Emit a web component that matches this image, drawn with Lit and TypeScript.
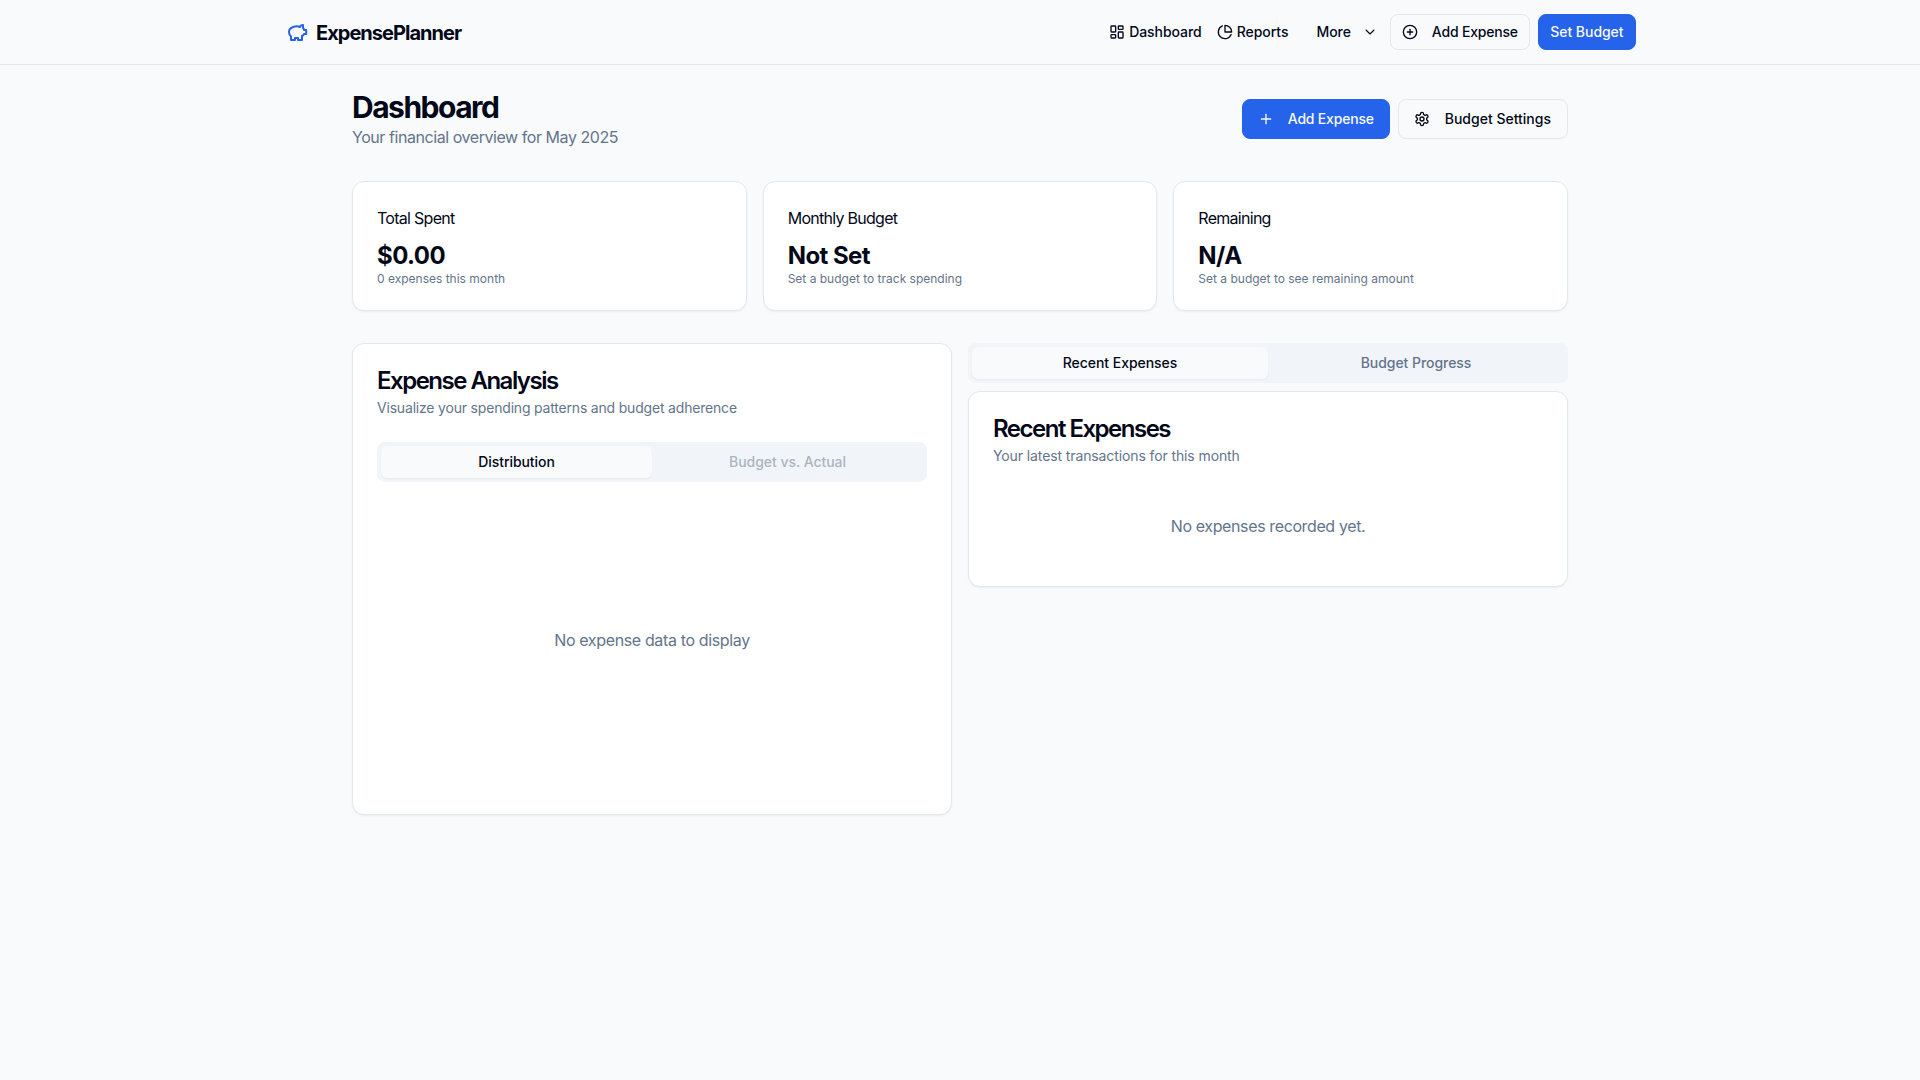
import {LitElement, html, css, svg} from 'lit';
import {customElement} from 'lit/decorators.js';

const icon = (body: unknown) =>
  html`<svg class="icon" viewBox="0 0 24 24" fill="none" stroke="currentColor" stroke-width="2" stroke-linecap="round" stroke-linejoin="round">${body}</svg>`;

const dashboardIcon = svg`<rect x="3" y="3" width="7" height="9" rx="1"/><rect x="14" y="3" width="7" height="5" rx="1"/><rect x="14" y="12" width="7" height="9" rx="1"/><rect x="3" y="16" width="7" height="5" rx="1"/>`;
const pieIcon = svg`<path d="M21.21 15.89A10 10 0 1 1 8 2.83"/><path d="M22 12A10 10 0 0 0 12 2v10z"/>`;
const chevronIcon = svg`<path d="m6 9 6 6 6-6"/>`;
const plusCircleIcon = svg`<circle cx="12" cy="12" r="10"/><path d="M8 12h8"/><path d="M12 8v8"/>`;
const plusIcon = svg`<path d="M5 12h14"/><path d="M12 5v14"/>`;
const gearIcon = svg`<path d="M12.22 2h-.44a2 2 0 0 0-2 2v.18a2 2 0 0 1-1 1.73l-.43.25a2 2 0 0 1-2 0l-.15-.08a2 2 0 0 0-2.73.73l-.22.38a2 2 0 0 0 .73 2.73l.15.1a2 2 0 0 1 1 1.72v.51a2 2 0 0 1-1 1.74l-.15.09a2 2 0 0 0-.73 2.73l.22.38a2 2 0 0 0 2.73.73l.15-.08a2 2 0 0 1 2 0l.43.25a2 2 0 0 1 1 1.73V20a2 2 0 0 0 2 2h.44a2 2 0 0 0 2-2v-.18a2 2 0 0 1 1-1.73l.43-.25a2 2 0 0 1 2 0l.15.08a2 2 0 0 0 2.73-.73l.22-.39a2 2 0 0 0-.73-2.73l-.15-.08a2 2 0 0 1-1-1.74v-.5a2 2 0 0 1 1-1.74l.15-.09a2 2 0 0 0 .73-2.73l-.22-.38a2 2 0 0 0-2.73-.73l-.15.08a2 2 0 0 1-2 0l-.43-.25a2 2 0 0 1-1-1.73V4a2 2 0 0 0-2-2z"/><circle cx="12" cy="12" r="3"/>`;
const piggyIcon = svg`<path d="M19 5c-1.5 0-2.8 1.4-3 2-3.5-1.5-11-.3-11 5 0 1.8 0 3 2 4.5V20h4v-2h3v2h4v-4c1-.5 1.7-1 2-2h2.2v-4H20c0-1-.5-1.5-1-2V5z"/>`;

const stats = [
  {label: 'Total Spent', value: '$0.00', note: '0 expenses this month'},
  {label: 'Monthly Budget', value: 'Not Set', note: 'Set a budget to track spending'},
  {label: 'Remaining', value: 'N/A', note: 'Set a budget to see remaining amount'},
];

@customElement('app-root')
export class AppRoot extends LitElement {
  static override styles = css`
    :host {
      display: block;
      min-height: 1080px;
      background: #f8fafc;
      color: #020817;
      font-family: Inter, 'Noto Sans', sans-serif;
      font-size: 16px;
      line-height: 24px;
    }
    .icon {
      display: block;
      width: 16px;
      height: 16px;
      flex: none;
    }
    .topbar {
      height: 64px;
      border-bottom: 1px solid #e2e8f0;
    }
    .topbar-inner {
      box-sizing: border-box;
      max-width: 1400px;
      height: 100%;
      margin: 0 auto;
      padding: 0 24px;
      display: flex;
      align-items: center;
      justify-content: space-between;
    }
    .logo {
      display: flex;
      align-items: center;
      gap: 8px;
      font-size: 20px;
      line-height: 28px;
      font-weight: 700;
      letter-spacing: -0.98px;
    }
    .logo span {
      padding-top: 2px;
    }
    .logo .icon {
      width: 24px;
      height: 24px;
      color: #2563eb;
    }
    .nav {
      display: flex;
      align-items: center;
      font-size: 14px;
      line-height: 20px;
      font-weight: 500;
      letter-spacing: -0.05px;
    }
    .nav-link {
      display: flex;
      align-items: center;
      gap: 4px;
      margin-right: 15px;
    }
    .more {
      display: flex;
      align-items: center;
      gap: 11px;
      margin: 0 12px 0 13px;
    }
    .more .icon {
      stroke-width: 1.6;
    }
    .btn {
      box-sizing: border-box;
      display: flex;
      align-items: center;
      border: 1px solid #e2e8f0;
      border-radius: 8px;
      background: #f8fafc;
      font-size: 14px;
      line-height: 20px;
      font-weight: 500;
      white-space: nowrap;
    }
    .btn.primary {
      background: #2563eb;
      border-color: #2563eb;
      color: #f8fafc;
    }
    .btn.sm {
      height: 36px;
      padding: 0 11px;
      gap: 14px;
    }
    .btn.sm.primary {
      padding: 0 11.5px;
    }
    .btn.md {
      height: 40px;
      padding: 0 16px 0 15px;
      gap: 15px;
    }
    .btn.md.primary {
      padding: 0 15px;
      gap: 14px;
    }
    .tight {
      letter-spacing: -0.2px;
    }
    .nav .btn + .btn {
      margin-left: 8px;
    }
    main {
      box-sizing: border-box;
      max-width: 1280px;
      margin: 0 auto;
      padding: 24px 32px;
    }
    .page-head {
      display: flex;
      align-items: center;
      justify-content: space-between;
      margin-bottom: 32px;
    }
    h1 {
      margin: 0;
      padding-top: 1px;
      font-size: 30px;
      line-height: 35px;
      font-weight: 700;
      letter-spacing: -1.5px;
    }
    .muted {
      color: #64748b;
    }
    .page-head p {
      margin: 0;
      letter-spacing: -0.44px;
    }
    .actions {
      display: flex;
      gap: 8px;
    }
    .stats {
      display: grid;
      grid-template-columns: repeat(3, 1fr);
      gap: 16px;
      margin-bottom: 32px;
    }
    .card {
      background: #fff;
      border: 1px solid #e2e8f0;
      border-radius: 12px;
      box-shadow: 0 1px 2px rgba(0, 0, 0, 0.05);
    }
    .stat {
      padding: 24px 24px 23px;
    }
    .stat-label {
      letter-spacing: -0.72px;
    }
    .stat-value {
      margin-top: 10px;
      font-size: 24px;
      line-height: 31px;
      font-weight: 700;
      letter-spacing: -0.55px;
    }
    .stat-note {
      font-size: 12px;
      line-height: 16px;
    }
    .columns {
      display: grid;
      grid-template-columns: 1fr 1fr;
      gap: 16px;
      align-items: start;
    }
    .card-head {
      padding: 24px 24px 0;
    }
    h2 {
      margin: 0;
      padding-top: 1px;
      font-size: 24px;
      line-height: 23px;
      font-weight: 600;
      letter-spacing: -1.5px;
    }
    .card-head p {
      margin: 6px 0 0;
      font-size: 14px;
      line-height: 20px;
      letter-spacing: -0.19px;
    }
    .right .card-head p {
      letter-spacing: -0.11px;
    }
    .card-body {
      padding: 24px;
    }
    .tabs {
      box-sizing: border-box;
      display: grid;
      grid-template-columns: 1fr 1fr;
      height: 40px;
      padding: 4px;
      border-radius: 8px;
      background: #f1f5f9;
      color: #64748b;
      font-size: 14px;
      line-height: 20px;
      font-weight: 500;
      letter-spacing: -0.05px;
    }
    .tab {
      display: flex;
      align-items: center;
      justify-content: center;
      border-radius: 6px;
    }
    .tab.active {
      background: #f8fafc;
      color: #020817;
      box-shadow: 0 1px 2px rgba(0, 0, 0, 0.05);
    }
    .tab.disabled {
      opacity: 0.5;
    }
    .chart {
      height: 300px;
      margin-top: 8px;
      display: flex;
      align-items: center;
      justify-content: center;
      letter-spacing: -0.36px;
    }
    .right .card {
      margin-top: 8px;
    }
    .empty {
      padding: 24px 0;
      text-align: center;
      letter-spacing: -0.38px;
    }
  `;

  override render() {
    return html`
      <header class="topbar">
        <div class="topbar-inner">
          <div class="logo">${icon(piggyIcon)}<span>ExpensePlanner</span></div>
          <nav class="nav">
            <div class="nav-link">${icon(dashboardIcon)}Dashboard</div>
            <div class="nav-link">${icon(pieIcon)}Reports</div>
            <div class="more">More ${icon(chevronIcon)}</div>
            <div class="btn sm tight">${icon(plusCircleIcon)}Add Expense</div>
            <div class="btn sm primary">Set Budget</div>
          </nav>
        </div>
      </header>
      <main>
        <section class="page-head">
          <div>
            <h1>Dashboard</h1>
            <p class="muted">Your financial overview for May 2025</p>
          </div>
          <div class="actions">
            <div class="btn md primary tight">${icon(plusIcon)}Add Expense</div>
            <div class="btn md">${icon(gearIcon)}Budget Settings</div>
          </div>
        </section>
        <section class="stats">
          ${stats.map(
            (s) => html`<div class="card stat">
              <div class="stat-label">${s.label}</div>
              <div class="stat-value">${s.value}</div>
              <div class="stat-note muted">${s.note}</div>
            </div>`
          )}
        </section>
        <section class="columns">
          <div class="card">
            <div class="card-head">
              <h2>Expense Analysis</h2>
              <p class="muted">Visualize your spending patterns and budget adherence</p>
            </div>
            <div class="card-body">
              <div class="tabs">
                <div class="tab active">Distribution</div>
                <div class="tab disabled">Budget vs. Actual</div>
              </div>
              <div class="chart muted">No expense data to display</div>
            </div>
          </div>
          <div class="right">
            <div class="tabs">
              <div class="tab active">Recent Expenses</div>
              <div class="tab">Budget Progress</div>
            </div>
            <div class="card">
              <div class="card-head">
                <h2>Recent Expenses</h2>
                <p class="muted">Your latest transactions for this month</p>
              </div>
              <div class="card-body">
                <div class="empty muted">No expenses recorded yet.</div>
              </div>
            </div>
          </div>
        </section>
      </main>
    `;
  }
}

declare global {
  interface HTMLElementTagNameMap {
    'app-root': AppRoot;
  }
}
